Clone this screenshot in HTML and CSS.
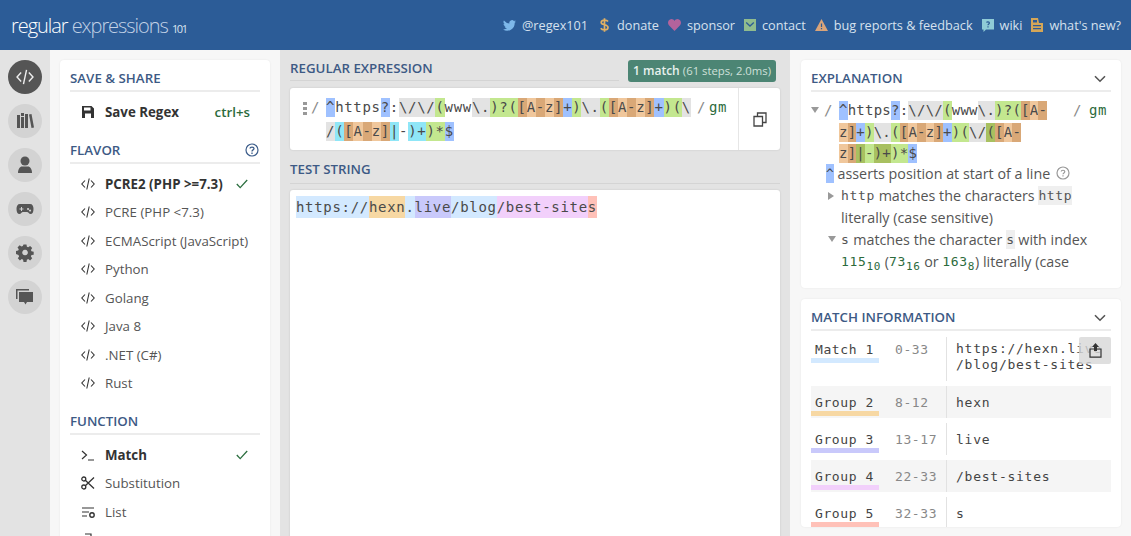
FILE: index.html
```html
<!DOCTYPE HTML>
<html>
<head>
	<title>regular expressions 101</title>
	<link rel="stylesheet" href="styles.css">
</head>
<body>
	<svg class="defs" width="0" height="0">
		<symbol id="i-code" viewBox="0 0 14 14"><path d="M4 3.5 .8 7 4 10.5M10 3.5 13.2 7 10 10.5M8.2 1.5 5.8 12.5" fill="none" stroke="currentColor" stroke-width="1.1"/></symbol>
		<symbol id="i-check" viewBox="0 0 12 10"><path d="M.8 5 4.2 8.6 11.2 1" fill="none" stroke="currentColor" stroke-width="1.3"/></symbol>
		<symbol id="i-chev" viewBox="0 0 12 8"><path d="M1 1.2 6 6.2 11 1.2" fill="none" stroke="currentColor" stroke-width="1.6"/></symbol>
	</svg>
	<header class="topbar">
		<div class="logo"><span class="logo-a">regular</span> <span class="logo-b">expressions</span> <span class="logo-c">101</span></div>
		<nav class="topnav">
			<a class="twitter"><svg width="13" height="11" viewBox="0 0 24 20"><path fill="#7db8ea" d="M24 2.4a10 10 0 0 1-2.8.8A5 5 0 0 0 23.300.5a10 10 0 0 1-3.100 1.200 4.900 4.900 0 0 0-8.400 4.500A14 14 0 0 1 1.700.9a4.900 4.900 0 0 0 1.500 6.600 5 5 0 0 1-2.200-.6c0 2.400 1.700 4.400 3.900 4.900a5 5 0 0 1-2.200.1 4.900 4.900 0 0 0 4.600 3.400A10 10 0 0 1 0 17.300 14 14 0 0 0 21.600 4.900 10 10 0 0 0 24 2.400z"/></svg>@regex101</a>
			<a class="donate"><svg width="9" height="14" viewBox="0 0 9 14"><path fill="none" stroke="#e0b064" stroke-width="1.7" d="M8 3.500C7.400 2.500 6 2.200 4.500 2.200 2.600 2.200 1.200 3 1.200 4.400 1.200 7.500 8 6 8 9.400 8 11 6.500 11.800 4.500 11.800 3 11.800 1.500 11.300.8 10.200M4.500 .3V13.700"/></svg>donate</a>
			<a><svg width="13" height="12" viewBox="0 0 13 12"><path fill="#b3639c" d="M6.500 12 .9 6.300C-.6 4.500-.1 1.800 1.600.700 3.500-.5 5.500.2 6.500 2 7.500.2 9.500-.5 11.400.7c1.700 1.100 2.200 3.800.7 5.600z"/></svg>sponsor</a>
			<a><svg width="12" height="12" viewBox="0 0 12 12"><rect width="12" height="12" fill="#8fbb8e"/><path d="M2.200 3.500 6 7 9.800 3.500" fill="none" stroke="#2c5c96" stroke-width="1.300"/></svg>contact</a>
			<a><svg width="13" height="12" viewBox="0 0 13 12"><path fill="#d9a47a" d="M6.500 0 13 12H0z"/><path stroke="#2c5c96" stroke-width="1.200" d="M6.500 4.500V8M6.500 9v1.300"/></svg>bug reports &amp; feedback</a>
			<a><svg width="12" height="13" viewBox="0 0 12 13"><path fill="#8fcbd6" d="M0 0H12V10.500H4L1.500 13V10.500H0z"/><path fill="none" stroke="#2c5c96" stroke-width="1.200" d="M4.600 3.600C4.800 2.600 7.400 2.500 7.400 4 7.400 5 6 5 6 6.300M6 7.200V8.400"/></svg>wiki</a>
			<a><svg width="12" height="14" viewBox="0 0 12 14"><path fill="#d5a657" d="M0 0H7L8 5H12V14H0z"/><path fill="#2c5c96" d="M2 2H6V4.500H2zM2 7H10V8.200H2zM2 10H10V11.200H2z"/></svg>what's new?</a>
		</nav>
	</header>
	<main class="app">
		<aside class="rail">
			<div class="rail-btn on"><svg width="18" height="18"><use href="#i-code"/></svg></div>
			<div class="rail-btn"><svg width="18" height="18" viewBox="0 0 18 18"><path fill="currentColor" d="M1 3H4V16H1zM5 5H8V16H5zM5 .9H8V4H5zM9 2H12V16H9zM13 2.500 15.500 2 18 15.500 15.500 16z"/></svg></div>
			<div class="rail-btn"><svg width="18" height="18" viewBox="0 0 18 18"><circle cx="9" cy="5" r="4.500" fill="currentColor"/><path fill="currentColor" d="M2 17c0-4 2-6.500 4-6.500h6c2 0 4 2.500 4 6.500z"/></svg></div>
			<div class="rail-btn"><svg width="18" height="18" viewBox="0 0 18 18"><path fill="currentColor" fill-rule="evenodd" d="M4 4h10c2.500 0 3.500 2 3.500 5s-1 5-3 5c-1.500 0-2-2-3.500-2H7c-1.500 0-2 2-3.500 2-2 0-3-2-3-5s1-5 3.500-5zM5 7v1.500H3.500V9.500H5V11H6V9.500H7.500V8.500H6V7zM12 8a1 1 0 1 0 .1 0zM14 9.500a1 1 0 1 0 .1 0z"/></svg></div>
			<div class="rail-btn"><svg width="18" height="18" viewBox="0 0 18 18"><path fill="currentColor" fill-rule="evenodd" d="M7.500 1h3l.4 2.200 1.300.6 1.900-1.300 2.100 2.100-1.300 1.900.6 1.300 2.200.4v3l-2.200.4-.6 1.300 1.300 1.900-2.100 2.100-1.900-1.300-1.300.6-.4 2.200h-3l-.4-2.200-1.300-.6-1.900 1.300-2.100-2.100 1.300-1.900-.6-1.300L0 10.500v-3l2.200-.4.6-1.300L1.500 3.900 3.600 1.800l1.900 1.300 1.300-.6zM9 6.200a2.800 2.800 0 1 0 .1 0z" transform="translate(0 -.5)"/></svg></div>
			<div class="rail-btn"><svg width="18" height="18" viewBox="0 0 18 18"><path fill="currentColor" d="M0 1H13V2.500H1.500V11H0zM3 4H17V14H11L9.500 16.500 8 14H3z"/></svg></div>
		</aside>
		<section class="side">
			<div class="card side-card">
				<h3 class="title">Save &amp; Share</h3>
				<div class="item strong save-item">
					<svg class="ico" width="14" height="14" viewBox="0 0 14 14"><path fill="#333" fill-rule="evenodd" d="M1 1H10.500L13 3.500V13H1zM3 2.500V5.500H9.500V2.500zM4 8.500V13H10V8.500z"/></svg>
					<span class="item-name">Save Regex</span><span class="shortcut">ctrl+s</span>
				</div>
				<h3 class="title title-help">Flavor
					<svg width="14" height="14" viewBox="0 0 14 14"><circle cx="7" cy="7" r="6" fill="none" stroke="#3b5c8a" stroke-width="1.200"/><path fill="none" stroke="#3b5c8a" stroke-width="1.300" d="M5 5.500C5 3.600 9 3.600 9 5.500 9 7 7 6.800 7 8.500M7 9.500V11"/></svg>
				</h3>
				<div class="item strong"><svg class="ico"><use href="#i-code"/></svg><span class="item-name">PCRE2 (PHP &gt;=7.3)</span><svg class="tick"><use href="#i-check"/></svg></div>
				<div class="item"><svg class="ico"><use href="#i-code"/></svg><span class="item-name">PCRE (PHP &lt;7.3)</span></div>
				<div class="item"><svg class="ico"><use href="#i-code"/></svg><span class="item-name">ECMAScript (JavaScript)</span></div>
				<div class="item"><svg class="ico"><use href="#i-code"/></svg><span class="item-name">Python</span></div>
				<div class="item"><svg class="ico"><use href="#i-code"/></svg><span class="item-name">Golang</span></div>
				<div class="item"><svg class="ico"><use href="#i-code"/></svg><span class="item-name">Java 8</span></div>
				<div class="item"><svg class="ico"><use href="#i-code"/></svg><span class="item-name">.NET (C#)</span></div>
				<div class="item"><svg class="ico"><use href="#i-code"/></svg><span class="item-name">Rust</span></div>
				<h3 class="title title-fn">Function</h3>
				<div class="item strong"><svg class="ico" viewBox="0 0 14 14"><path d="M1 3 5.500 7 1 11M7 12H13" fill="none" stroke="#333" stroke-width="1.200"/></svg><span class="item-name">Match</span><svg class="tick"><use href="#i-check"/></svg></div>
				<div class="item"><svg class="ico" viewBox="0 0 14 14"><g fill="none" stroke="#333" stroke-width="1.300"><circle cx="2.800" cy="3" r="2"/><circle cx="2.800" cy="11" r="2"/><path d="M4.300 4.300 13 12.500M4.300 9.700 13 1.500"/></g></svg><span class="item-name">Substitution</span></div>
				<div class="item"><svg class="ico" viewBox="0 0 14 14"><path d="M1 3H13M1 7H8M1 11H6" fill="none" stroke="#333" stroke-width="1.200"/><circle cx="11" cy="10" r="2.200" fill="none" stroke="#333" stroke-width="1.400"/></svg><span class="item-name">List</span></div>
				<div class="item"><svg class="ico" viewBox="0 0 14 14"><path d="M4 1H10V13" fill="none" stroke="#333" stroke-width="1.200"/></svg></div>
			</div>
		</section>
		<section class="center">
			<div class="regex-head">
				<h3 class="title regex-title">Regular Expression</h3>
				<div class="badge"><b>1 match</b> <span>(61 steps, 2.0ms)</span></div>
			</div>
			<div class="regex-box">
				<div class="regex-main">
					<svg class="dots" width="4" height="14"><path fill="#999" d="M0 0h4v3H0zM0 5h4v3H0zM0 10h4v3H0z"/></svg>
					<span class="slash">/</span>
					<div class="regex-lines">
						<div class="rline"><i class="b">^</i>https<i class="b">?</i>:<i class="g">\/\/</i><i class="v">(</i>www<i class="g">\.</i><i class="v">)?(</i><i class="d">[</i><i class="o">A</i><i class="d">-</i><i class="o">z</i><i class="d">]</i><i class="b">+</i><i class="v">)</i><i class="g">\.</i><i class="v">(</i><i class="d">[</i><i class="o">A</i><i class="d">-</i><i class="o">z</i><i class="d">]</i><i class="b">+</i><i class="v">)(</i><i class="g">\</i></div>
						<div class="rline"><i class="g">/</i><i class="c">(</i><i class="d">[</i><i class="o">A</i><i class="d">-</i><i class="o">z</i><i class="d">]</i><i class="c">|</i>-<i class="c">)+</i><i class="v">)*</i><i class="b">$</i></div>
					</div>
					<span class="slash end">/</span><span class="flags">gm</span>
				</div>
				<div class="regex-tool">
					<svg width="14" height="15" viewBox="0 0 14 15"><path fill="none" stroke="#444" stroke-width="1.300" d="M1 4.500H9.500V14H1zM4.500 4.500V1H13V10.500H9.500"/></svg>
				</div>
			</div>
			<h3 class="title test-title">Test String</h3>
			<div class="test-box">
				<div class="rline"><i class="m1">https://</i><i class="m2">hexn</i><i class="m1">.</i><i class="m3">live</i><i class="m1">/blog</i><i class="m4">/best-site</i><i class="m5">s</i></div>
			</div>
		</section>
		<section class="right">
			<div class="card right-card expl">
				<h3 class="title title-chev">Explanation<svg width="12" height="8"><use href="#i-chev"/></svg></h3>
				<div class="expl-regex">
					<span class="tri down"></span><span class="slash">/</span>
					<div class="expl-lines">
						<div class="eline"><i class="b">^</i>https<i class="b">?</i>:<i class="g">\/\/</i><i class="v">(</i>www<i class="g">\.</i><i class="v">)?(</i><i class="d">[</i><i class="o">A</i><i class="d">-</i></div>
						<div class="eline"><i class="o">z</i><i class="d">]</i><i class="b">+</i><i class="v">)</i><i class="g">\.</i><i class="v">(</i><i class="d">[</i><i class="o">A</i><i class="d">-</i><i class="o">z</i><i class="d">]</i><i class="b">+</i><i class="v">)(</i><i class="g">\/</i><i class="dv">(</i><i class="d">[</i><i class="o">A</i><i class="d">-</i></div>
						<div class="eline"><i class="o">z</i><i class="d">]</i><i class="dv">|</i><i class="v">-</i><i class="dv">)+</i><i class="v">)*</i><i class="b">$</i></div>
					</div>
					<span class="slash end">/</span><span class="flags">gm</span>
				</div>
				<div class="expl-row lvl1"><i class="b cap">^</i><span> asserts position at start of a line</span><svg width="14" height="14" viewBox="0 0 14 14"><circle cx="7" cy="7" r="6" fill="none" stroke="#999" stroke-width="1.200"/><path fill="none" stroke="#999" stroke-width="1.200" d="M5.200 5.500C5.200 3.800 8.800 3.800 8.800 5.500 8.800 7 7 6.800 7 8.300M7 9.300V10.600"/></svg></div>
				<div class="expl-row lvl2"><span class="tri right-tri"></span><code>http</code> matches the characters <code class="chip">http</code></div>
				<div class="expl-row lvl2">literally (case sensitive)</div>
				<div class="expl-row lvl2"><span class="tri down"></span><code>s</code> matches the character <code class="chip">s</code> with index</div>
				<div class="expl-row lvl2"><code class="num">115<sub>10</sub></code> (<code class="num">73<sub>16</sub></code> or <code class="num">163<sub>8</sub></code>) literally (case</div>
			</div>
			<div class="card right-card info">
				<h3 class="title title-chev">Match Information<svg width="12" height="8"><use href="#i-chev"/></svg></h3>
				<div class="rows">
					<button class="copy-btn"><svg width="13" height="15" viewBox="0 0 13 15"><path fill="none" stroke="#333" stroke-width="1.200" d="M1 6H12V14.200H1z"/><path fill="#333" d="M6.500 0 10 4H8V8H5V4H3z"/></svg></button>
					<div class="mrow first"><div class="mlabel"><span class="u-m1">Match 1</span></div><div class="mrange">0-33</div><div class="mval">https://hexn.live<br>/blog/best-sites</div></div>
					<div class="mrow alt"><div class="mlabel"><span class="u-m2">Group 2</span></div><div class="mrange">8-12</div><div class="mval">hexn</div></div>
					<div class="mrow"><div class="mlabel"><span class="u-m3">Group 3</span></div><div class="mrange">13-17</div><div class="mval">live</div></div>
					<div class="mrow alt"><div class="mlabel"><span class="u-m4">Group 4</span></div><div class="mrange">22-33</div><div class="mval">/best-sites</div></div>
					<div class="mrow"><div class="mlabel"><span class="u-m5">Group 5</span></div><div class="mrange">32-33</div><div class="mval">s</div></div>
				</div>
			</div>
		</section>
	</main>
</body>
</html>
```

FILE: styles.css
```css
*, *::after, *::before{
	box-sizing: border-box;
	margin: 0;
	padding: 0;
}
html, body{
	width: 100%;
	height: 100%;
	overflow: hidden;
}
body{
	display: flex;
	flex-direction: column;
	font-family: "Open Sans", sans-serif;
	font-size: 13.3px;
	color: #444;
	background-color: #f7f7f7;
}
i{font-style: normal;}
.defs{position: absolute;}

/* top bar */
.topbar{
	flex: 0 0 50px;
	display: flex;
	align-items: center;
	justify-content: space-between;
	padding: 0 10px 0 11px;
	background-color: #2c5c97;
}
.logo{
	font-size: 20px;
	font-weight: 300;
	letter-spacing: -1.05px;
	white-space: nowrap;
}
.logo-a{color: #fff;}
.logo-b{color: #c2d2e6;}
.logo-c{color: #dbe5f0; font-size: 11px; font-weight: 400; letter-spacing: -1.4px;}
.topnav{
	display: flex;
	align-items: center;
	gap: 9px;
	font-size: 12.7px;
	color: #d6e1ee;
}
.topnav a{
	display: flex;
	align-items: center;
	gap: 6px;
	white-space: nowrap;
}
.topnav .twitter{margin-right: 3px;}
.topnav .donate{gap: 8px;}

/* page columns */
.app{
	flex: 1;
	display: flex;
	min-height: 0;
}
.rail{
	flex: 0 0 50px;
	display: flex;
	flex-direction: column;
	align-items: center;
	gap: 10px;
	padding-top: 10px;
	background-color: #e3e3e3;
}
.rail-btn{
	display: flex;
	align-items: center;
	justify-content: center;
	width: 34px;
	height: 34px;
	border-radius: 50%;
	color: #555;
	background-color: #d3d3d3;
}
.rail-btn.on{
	color: #eee;
	background-color: #555;
}
.side{
	flex: 0 0 230px;
	padding: 10px 10px 0;
	overflow: hidden;
}
.card{
	background-color: #fff;
	border-radius: 4px;
	box-shadow: 0 0 2px rgba(0,0,0,.08);
}
.side-card{
	height: 560px;
	padding: 10px 10px 0;
}
.title{
	font-size: 13.3px;
	font-weight: 600;
	line-height: 17px;
	color: #3d5a85;
	text-transform: uppercase;
	padding-bottom: 3px;
	border-bottom: 2px solid #ececec;
}
.title-help, .title-chev{
	display: flex;
	align-items: center;
	justify-content: space-between;
}
.title-help{margin-top: 15px; padding-right: 1px; margin-bottom: 6px;}
.title-fn{margin-top: 15px; margin-bottom: 6px;}
.title-chev{padding-right: 5px; color: #3d5a85;}
.title-chev svg{color: #555;}

.item{
	display: flex;
	align-items: center;
	height: 28.5px;
	padding: 0 12px 0 11px;
	color: #555;
}
.save-item{margin: 6px 0 0; padding-right: 10px;}
.strong .item-name{font-weight: 700; color: #333;}
.ico{
	flex: 0 0 14px;
	width: 14px;
	height: 14px;
	margin-right: 10px;
	color: #333;
}
.item-name{flex: 1; white-space: nowrap;}
.tick{
	width: 12px;
	height: 10px;
	color: #2b6e3f;
}
.shortcut{
	font-weight: 600;
	color: #2c6b3c;
}

/* middle column */
.center{
	flex: 0 0 510px;
	padding: 8px 10px 0;
	background-color: #e3e3e3;
	overflow: hidden;
}
.regex-head{
	display: flex;
	align-items: flex-start;
	justify-content: space-between;
}
.regex-title{
	width: 329px;
	height: 23px;
	border-bottom-color: #d4d4d4;
	padding-top: 2px;
}
.center .title{border-bottom-width: 1px; color: #3d5a85;}
.badge{
	margin: 2px 4px 0 0;
	height: 22px;
	line-height: 22px;
	padding: 0 5px;
	border-radius: 3px;
	background-color: #4c8574;
	color: #e8f1ee;
	font-size: 12px;
	white-space: nowrap;
}
.badge b{font-weight: 600;}
.badge span{font-size: 11.3px; color: #cfe0da;}
.regex-box{
	display: flex;
	height: 62px;
	margin-top: 6px;
	background-color: #fff;
	border-radius: 3px;
	box-shadow: 0 0 2px rgba(0,0,0,.15);
}
.regex-main{
	flex: 1;
	display: flex;
	align-items: flex-start;
	padding: 10px 0 0 13px;
	border-right: 1px solid #e6e6e6;
}
.dots{margin-top: 4px;}
.regex-main .slash{margin-left: 4px; width: 15px;}
.slash{
	font-family: "DejaVu Sans Mono", monospace;
	font-size: 14px;
	line-height: 19px;
	color: #888;
}
.regex-lines{width: 370px;}
.rline, .eline{
	font-family: "DejaVu Sans Mono", monospace;
	font-size: 14px;
	letter-spacing: 0.69px;
	line-height: 19px;
	height: 19px;
	color: #4a4a4a;
	white-space: pre;
}
.eline{letter-spacing: 0.24px;}
.rline + .rline{margin-top: 5px;}
.rline i, .eline i{display: inline-block; height: 19px;}
.regex-main .slash.end{margin-left: 1px; width: 12px;}
.flags{
	font-family: "DejaVu Sans Mono", monospace;
	font-size: 14px;
	letter-spacing: 0.69px;
	line-height: 19px;
	color: #2c6b3c;
}
.regex-tool{
	flex: 0 0 41px;
	display: flex;
	align-items: center;
	justify-content: center;
}
.test-title{
	margin-top: 10px;
	height: 24px;
	padding-top: 1px;
	border-bottom-color: #d4d4d4;
}
.test-box{
	height: 400px;
	margin-top: 6px;
	padding: 6px;
	background-color: #fff;
	border-radius: 3px;
	box-shadow: 0 0 2px rgba(0,0,0,.15);
}
.test-box .rline{line-height: 22px; height: 22px;}
.test-box .rline i{height: 22px;}

/* token colours */
.b{background-color: #9fc1ff;}
.g{background-color: #e3e3e3;}
.v{background-color: #c3e78f;}
.d{background-color: #d9a877;}
.o{background-color: #f0c79c;}
.c{background-color: #8fe6f7;}
.dv{background-color: #a8c060;}
.m1{background-color: #d3e9ff;}
.m2{background-color: #f7d8a3;}
.m3{background-color: #c9c9fb;}
.m4{background-color: #f2d0fb;}
.m5{background-color: #ffc1b8;}

/* right column */
.right{
	flex: 0 0 341px;
	padding: 10px 10px 0 11px;
	overflow: hidden;
}
.right-card{
	height: 228px;
	padding: 10px 10px 0;
	overflow: hidden;
}
.info{margin-top: 11px;}
.expl-regex{
	display: flex;
	align-items: flex-start;
	margin-top: 9px;
	margin-bottom: -1px;
}
.expl-regex .slash{width: 12px; margin-left: -3px; margin-right: 3px;}
.expl-regex .slash.end{margin-left: -3px; margin-right: 0; width: 16px;}
.expl-regex > .tri{margin: 6px 8px 0 0;}
.expl-lines{width: 237px;}
.eline{margin-bottom: 2.5px;}
.eline:last-child{margin-bottom: 0;}
.tri{
	display: inline-block;
	flex: none;
	width: 0;
	height: 0;
}
.tri.down{
	border-left: 4px solid transparent;
	border-right: 4px solid transparent;
	border-top: 6px solid #999;
}
.tri.right-tri{
	border-top: 4px solid transparent;
	border-bottom: 4px solid transparent;
	border-left: 6px solid #999;
}
.expl-row{
	position: relative;
	display: flex;
	align-items: center;
	height: 22px;
	font-size: 14.3px;
	color: #555;
	white-space: pre;
}
.expl-row svg{margin-left: 6px;}
.expl-row code{
	font-family: "DejaVu Sans Mono", monospace;
	font-size: 13px;
	letter-spacing: 0.65px;
}
.lvl1{padding-left: 15px;}
.lvl2{padding-left: 30px;}
.lvl2 .tri{position: absolute; left: 17px; top: 8px;}
.lvl1 .cap{
	font-family: "DejaVu Sans Mono", monospace;
	font-size: 13px;
	line-height: 19px;
	color: #444;
}
.chip{
	background-color: #efefef;
	line-height: 19px;
}
.expl-row .num{color: #2c6b3c; font-weight: 500;}
.num sub{font-size: 11px; line-height: 0;}

.rows{
	position: relative;
	margin-top: 6px;
}
.copy-btn{
	position: absolute;
	top: 0;
	right: 0;
	width: 32px;
	height: 27px;
	border: 0;
	border-radius: 2px;
	background-color: rgba(215,215,215,.8);
	display: flex;
	align-items: center;
	justify-content: center;
}
.mrow{
	display: flex;
	margin-bottom: 5px;
	height: 32px;
	font-family: "DejaVu Sans Mono", monospace;
	font-size: 13px;
	letter-spacing: 0.6px;
	color: #444;
}
.mrow.first{height: 44px;}
.mrow.alt{background-color: #f5f5f5;}
.mlabel{flex: 0 0 84px; padding-top: 8px;}
.first .mlabel, .first .mrange{padding-top: 4px;}
.mlabel span{
	display: block;
	width: 68px;
	height: 22px;
	line-height: 17px;
	padding-left: 4px;
	border-bottom-width: 5px;
	border-bottom-style: solid;
}
.u-m1{border-bottom-color: #d3e9ff;}
.u-m2{border-bottom-color: #f7d8a3;}
.u-m3{border-bottom-color: #c9c9fb;}
.u-m4{border-bottom-color: #f2d0fb;}
.u-m5{border-bottom-color: #ffc1b8;}
.mrange{flex: 0 0 51px; padding-top: 8px; line-height: 17px; color: #888;}
.mval{
	flex: 1;
	padding: 8px 0 0 9px;
	line-height: 17px;
	letter-spacing: 0.75px;
	border-left: 1px solid #e2e2e2;
	white-space: nowrap;
}
.first .mval{padding-top: 4px; line-height: 16px;}
```
